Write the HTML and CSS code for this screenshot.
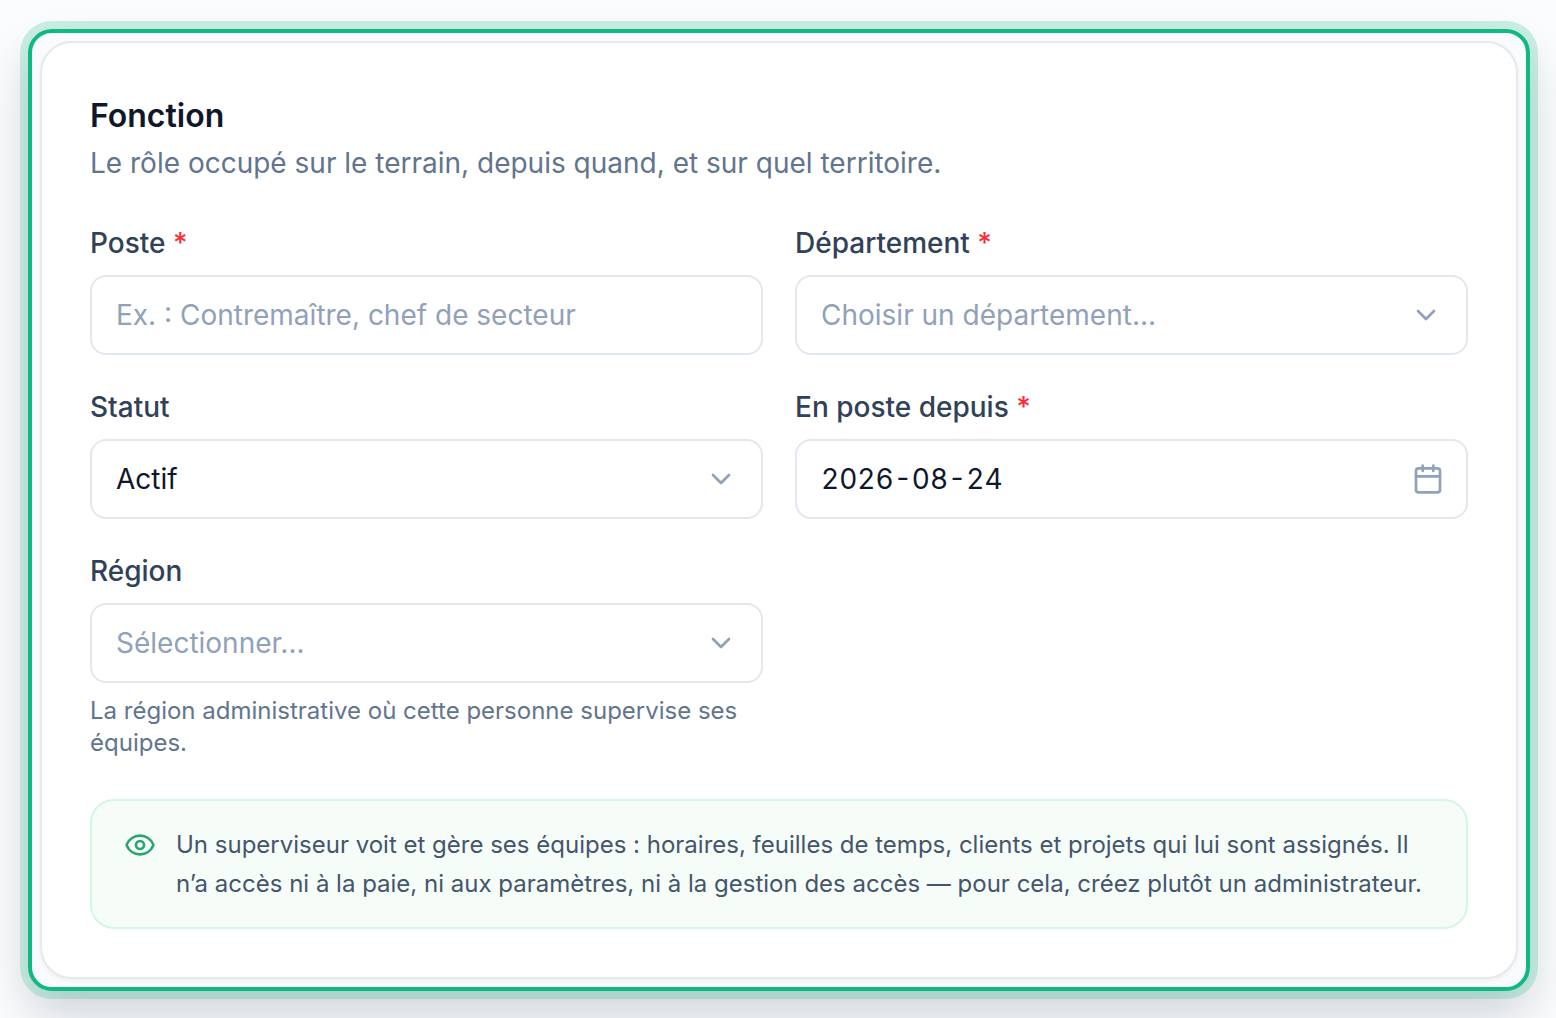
FILE: index.html
```html
<!DOCTYPE html>
<html lang="fr">
<head>
    <meta charset="UTF-8">
    <meta name="viewport" content="width=device-width, initial-scale=1.0">
    <title>Fonction</title>
    <link rel="stylesheet" href="styles.css">
</head>
<body>
    <main class="highlight">
        <form class="card">
            <h2>Fonction</h2>
            <p class="subtitle">Le rôle occupé sur le terrain, depuis quand, et sur quel territoire.</p>

            <div class="fields">
                <div class="field">
                    <label for="poste">Poste <span class="required">*</span></label>
                    <input type="text" id="poste" class="control" placeholder="Ex. : Contremaître, chef de secteur" required>
                </div>
                <div class="field">
                    <label for="departement">Département <span class="required">*</span></label>
                    <div class="control-wrap">
                        <select id="departement" class="control" required>
                            <option value="">Choisir un département...</option>
                        </select>
                        <svg class="icon" viewBox="0 0 24 24"><path d="m6 9 6 6 6-6"/></svg>
                    </div>
                </div>
                <div class="field">
                    <label for="statut">Statut</label>
                    <div class="control-wrap">
                        <select id="statut" class="control">
                            <option value="actif">Actif</option>
                            <option value="inactif">Inactif</option>
                        </select>
                        <svg class="icon" viewBox="0 0 24 24"><path d="m6 9 6 6 6-6"/></svg>
                    </div>
                </div>
                <div class="field">
                    <label for="depuis">En poste depuis <span class="required">*</span></label>
                    <div class="control-wrap">
                        <input type="text" id="depuis" class="control date" value="2026-08-24" inputmode="numeric" required>
                        <svg class="icon calendar-icon" viewBox="0 0 24 24"><path d="M8 2v4M16 2v4M3 10h18"/><rect x="3" y="4" width="18" height="18" rx="2"/></svg>
                    </div>
                </div>
                <div class="field">
                    <label for="region">Région</label>
                    <div class="control-wrap">
                        <select id="region" class="control" required aria-describedby="region-hint">
                            <option value="">Sélectionner...</option>
                        </select>
                        <svg class="icon" viewBox="0 0 24 24"><path d="m6 9 6 6 6-6"/></svg>
                    </div>
                    <p id="region-hint" class="hint">La région administrative où cette personne supervise ses équipes.</p>
                </div>
            </div>

            <div class="notice">
                <svg class="notice-icon" viewBox="0 0 24 24"><path d="M2.06 12.35a1 1 0 0 1 0-.7 10.75 10.75 0 0 1 19.88 0 1 1 0 0 1 0 .7 10.75 10.75 0 0 1-19.88 0"/><circle cx="12" cy="12" r="3"/></svg>
                <p>Un superviseur voit et gère ses équipes : horaires, feuilles de temps, clients et projets qui lui sont assignés. Il n’a accès ni à la paie, ni aux paramètres, ni à la gestion des accès — pour cela, créez plutôt un administrateur.</p>
            </div>
        </form>
    </main>
</body>
</html>
```
FILE: styles.css
```css
* {
    box-sizing: border-box;
}
body {
    margin: 0;
    padding: 29px 26px 27px 28px;
    font-family: Inter, sans-serif;
    font-optical-sizing: none;
    font-size: 28px;
    line-height: 40px;
    color: #0f172b;
    background-color: #fafcfd;
}
h2, p {
    margin: 0;
}
.highlight {
    padding: 8px;
    border: 4px solid #10b981;
    border-radius: 24px;
    background-color: #fafbfd;
    box-shadow: 0 0 0 8px rgba(16, 185, 129, 0.2), 0 24px 48px rgba(15, 30, 42, 0.18);
}
.card {
    padding: 48px;
    border: 2px solid #e6e9ee;
    border-radius: 32px;
    background-color: #fff;
    box-shadow: 0 2px 4px rgba(15, 23, 42, 0.05);
}
h2 {
    font-size: 32px;
    font-weight: 600;
    line-height: 50px;
}
.subtitle {
    margin-top: 2px;
    color: #62748e;
}
.fields {
    display: grid;
    grid-template-columns: 1fr 1fr;
    gap: 32px;
    margin-top: 40px;
}
.field {
    display: flex;
    flex-direction: column;
    gap: 12px;
}
label {
    font-weight: 500;
    color: #314158;
}
.required {
    color: #fb2c36;
}
.control-wrap {
    position: relative;
}
.control {
    display: block;
    width: 100%;
    height: 80px;
    padding: 0 24px;
    border: 2px solid #e2e8f0;
    border-radius: 16px;
    background-color: #fff;
    font: inherit;
    font-optical-sizing: none;
    color: #0f172b;
    appearance: none;
}
.control::placeholder {
    color: #90a1b9;
    opacity: 1;
}
select.control:invalid {
    color: #90a1b9;
}
.control:focus {
    outline: none;
    border-color: #10b981;
}
.date {
    font-variant-numeric: tabular-nums;
}
.icon {
    position: absolute;
    top: 24px;
    right: 26px;
    pointer-events: none;
}
.calendar-icon {
    right: 24px;
}
.icon, .notice-icon {
    flex: none;
    width: 32px;
    height: 32px;
    fill: none;
    stroke: #90a1b9;
    stroke-width: 2;
    stroke-linecap: round;
    stroke-linejoin: round;
}
.hint {
    font-size: 24px;
    line-height: 32px;
    color: #62748e;
}
.notice {
    display: flex;
    gap: 20px;
    margin-top: 40px;
    padding: 24px 32px;
    border: 2px solid #d5f6e5;
    border-radius: 24px;
    background-color: #f6fdf9;
    font-size: 24px;
    line-height: 39px;
    color: #45556c;
}
.notice-icon {
    margin-top: 4px;
    stroke: #2aa56f;
}
```
